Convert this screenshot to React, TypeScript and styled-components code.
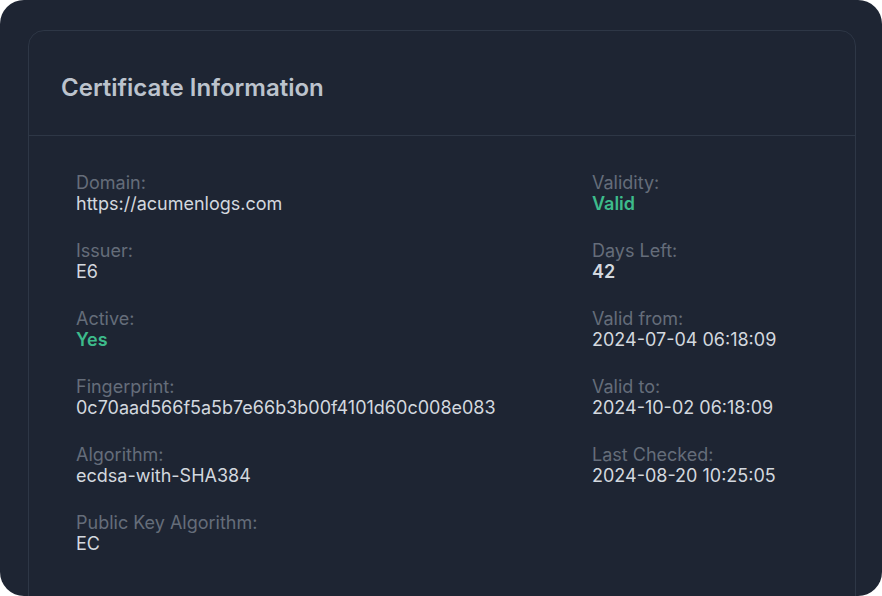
import React from "react";
import styled, { createGlobalStyle } from "styled-components";

const Global = createGlobalStyle`
  html, body { margin: 0; padding: 0; background: #ffffff; }
  body { font-family: Inter, "Noto Sans", sans-serif; -webkit-font-smoothing: antialiased; }
`;

const Frame = styled.div`
  width: 882px;
  height: 596px;
  box-sizing: border-box;
  background: #1e2533;
  border-radius: 24px;
  overflow: hidden;
  padding: 30px 26px 0 28px;
`;

const Card = styled.section`
  border: 1px solid #2e3746;
  border-radius: 16px;
  background: #1e2533;
  min-height: 620px;
`;

const Header = styled.header`
  padding: 41px 32px 31px;
  border-bottom: 1px solid #2e3746;
`;

const Title = styled.h2`
  margin: 0;
  font-size: 24px;
  line-height: 32px;
  font-weight: 600;
  color: #bcc3cd;
  letter-spacing: 0;
`;

const Body = styled.div`
  display: grid;
  grid-template-columns: 516px 1fr;
  padding: 36px 47px;
`;

const Column = styled.div`
  display: flex;
  flex-direction: column;
  gap: 26px;
`;

const Item = styled.div`
  display: flex;
  flex-direction: column;
`;

const Label = styled.span`
  font-size: 18px;
  line-height: 21px;
  color: #656d7a;
`;

const Value = styled.span<{ $tone?: "green" | "strong" }>`
  font-size: 18px;
  line-height: 21px;
  color: ${(p) => (p.$tone === "green" ? "#3dbb8b" : "#d3d8df")};
  font-weight: ${(p) => (p.$tone ? 600 : 400)};
`;

type Row = { label: string; value: string; tone?: "green" | "strong" };

const left: Row[] = [
  { label: "Domain:", value: "https://acumenlogs.com" },
  { label: "Issuer:", value: "E6" },
  { label: "Active:", value: "Yes", tone: "green" },
  { label: "Fingerprint:", value: "0c70aad566f5a5b7e66b3b00f4101d60c008e083" },
  { label: "Algorithm:", value: "ecdsa-with-SHA384" },
  { label: "Public Key Algorithm:", value: "EC" },
];

const right: Row[] = [
  { label: "Validity:", value: "Valid", tone: "green" },
  { label: "Days Left:", value: "42", tone: "strong" },
  { label: "Valid from:", value: "2024-07-04 06:18:09" },
  { label: "Valid to:", value: "2024-10-02 06:18:09" },
  { label: "Last Checked:", value: "2024-08-20 10:25:05" },
];

const renderCol = (rows: Row[]) => (
  <Column>
    {rows.map((r) => (
      <Item key={r.label}>
        <Label>{r.label}</Label>
        <Value $tone={r.tone}>{r.value}</Value>
      </Item>
    ))}
  </Column>
);

export default function App() {
  return (
    <>
      <Global />
      <Frame>
        <Card>
          <Header>
            <Title>Certificate Information</Title>
          </Header>
          <Body>
            {renderCol(left)}
            {renderCol(right)}
          </Body>
        </Card>
      </Frame>
    </>
  );
}
